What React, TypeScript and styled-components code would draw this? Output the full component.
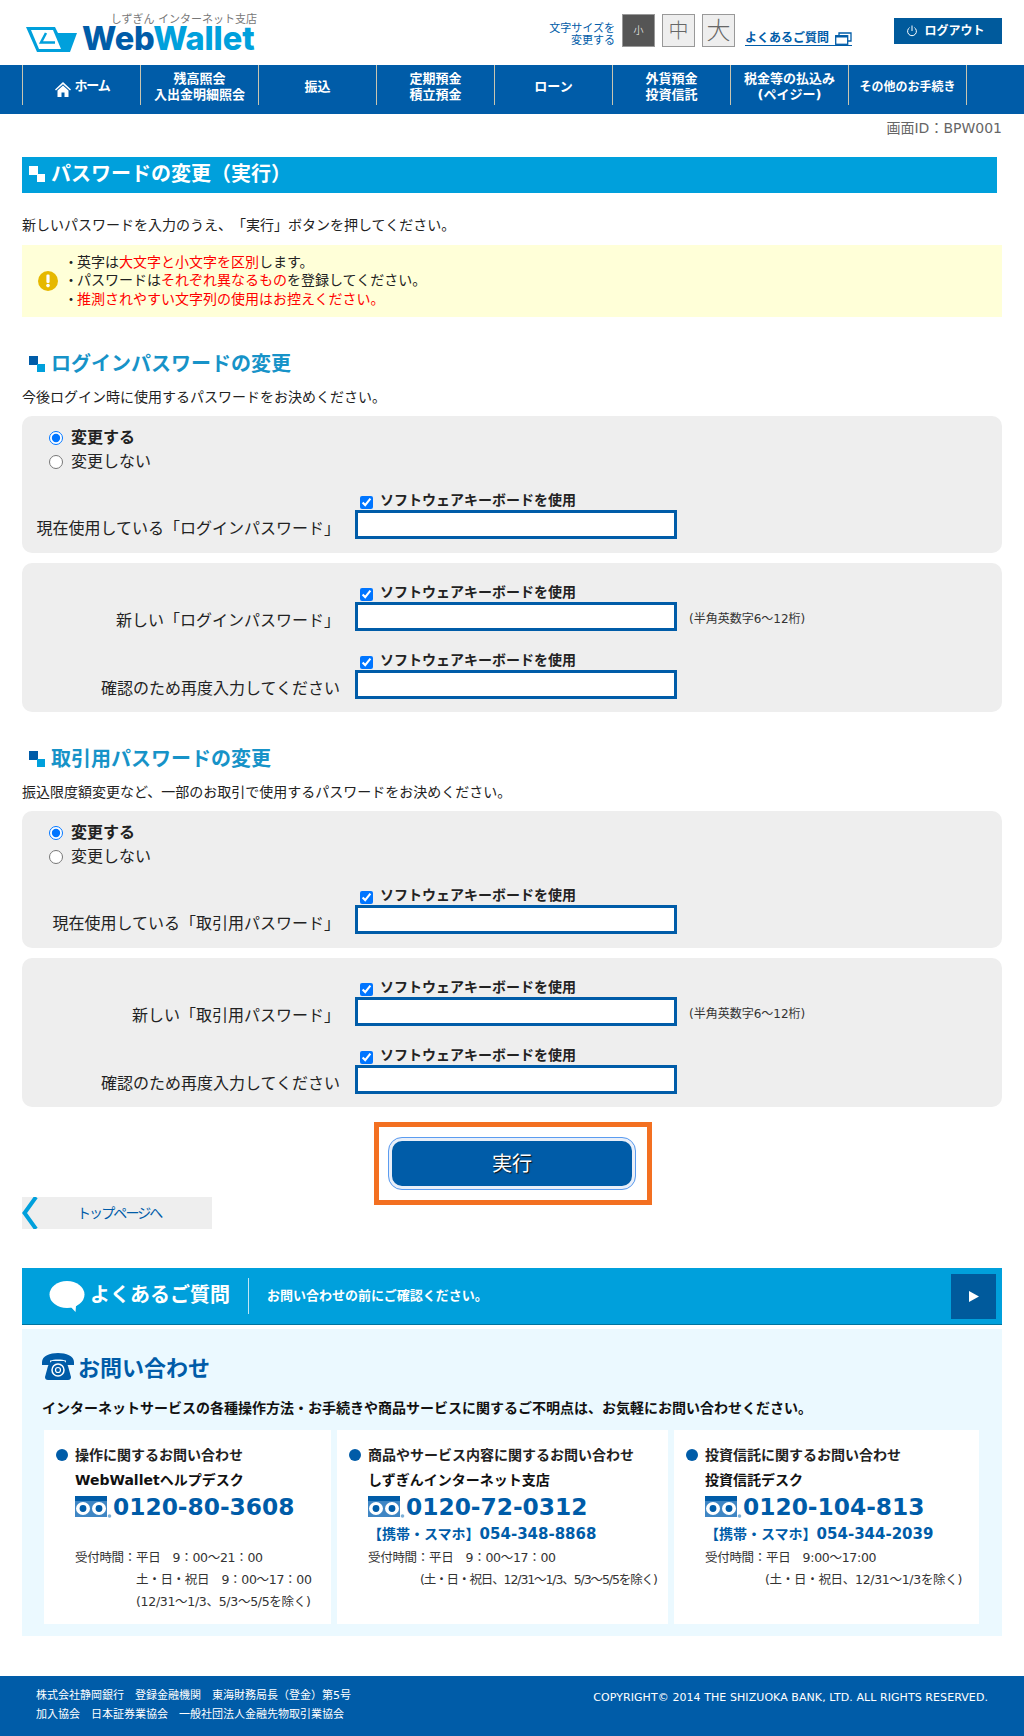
import styled, { createGlobalStyle } from 'styled-components';

const GlobalStyle = createGlobalStyle`
  html, body {
    margin: 0;
    padding: 0;
    background: #fff;
  }
  body {
    font-family: "DejaVu Sans", "Noto Sans CJK JP", sans-serif;
    font-size: 14px;
    line-height: 20px;
    color: #222;
    text-spacing-trim: space-all;
  }
  * {
    box-sizing: border-box;
  }
`;

const NAVY = '#005ca8';
const SKY = '#00a0dc';

const Page = styled.div`
  width: 1024px;
  height: 1736px;
  overflow: hidden;
`;

const Header = styled.header`
  height: 65px;
  padding: 0 22px 0 26px;
  display: flex;
  align-items: flex-start;
`;

const Logo = styled.div`
  width: 232px;
  padding-top: 13px;
`;

const LogoTagline = styled.div`
  font-size: 11px;
  line-height: 13px;
  color: #777;
  text-align: right;
  margin-right: 1px;
`;

const LogoRow = styled.div`
  display: flex;
  align-items: center;
  gap: 5px;
`;

const LogoWord = styled.div`
  font-family: Inter, sans-serif;
  font-weight: 800;
  font-size: 32.5px;
  line-height: 26px;
  letter-spacing: -0.1px;
  color: ${SKY};
  white-space: nowrap;

  b {
    font-weight: 800;
    color: ${NAVY};
  }
`;

const HeaderTools = styled.div`
  margin-left: auto;
  display: flex;
  align-items: flex-start;
`;

const SizeCaption = styled.div`
  width: 80px;
  margin: 21px 7px 0 0;
  font-size: 11px;
  line-height: 12px;
  text-align: right;
  color: ${NAVY};
  font-family: "Noto Sans CJK JP", sans-serif;
`;

const SizeButton = styled.div<{ $active?: boolean; $size: number }>`
  width: 33px;
  height: 33px;
  margin: 14px 7px 0 0;
  display: flex;
  align-items: center;
  justify-content: center;
  border: 1px solid #999;
  background: ${(p) => (p.$active ? '#555' : '#eee')};
  color: ${(p) => (p.$active ? '#fff' : '#666')};
  font-size: ${(p) => p.$size}px;
  line-height: 1;
  font-weight: 300;
`;

const FaqLink = styled.a`
  margin: 31px 42px 0 3px;
  display: flex;
  align-items: center;
  gap: 6px;
  font-size: 12px;
  line-height: 14px;
  height: 15px;
  font-weight: 700;
  color: ${NAVY};
  border-bottom: 1px solid ${NAVY};
`;

const LogoutButton = styled.div`
  width: 108px;
  height: 26px;
  margin-top: 18px;
  padding-right: 5px;
  display: flex;
  align-items: center;
  justify-content: center;
  gap: 6px;
  background: #005a9c;
  color: #fff;
  font-size: 12px;
  font-weight: 700;
`;

const Nav = styled.nav`
  height: 49px;
  padding-left: 22px;
  background: ${NAVY};
  display: flex;
  align-items: flex-start;
`;

const NavItem = styled.div<{ $first?: boolean; $small?: boolean }>`
  width: ${(p) => (p.$first ? 119 : 118)}px;
  height: 40px;
  padding-top: 3px;
  display: flex;
  align-items: center;
  justify-content: center;
  gap: 3px;
  text-align: center;
  color: #fff;
  font-size: ${(p) => (p.$small ? 12 : 13)}px;
  line-height: 16px;
  font-weight: 700;
  white-space: pre-line;
  border-right: 1px solid #c9c5b0;
  border-left: ${(p) => (p.$first ? '1px solid #c9c5b0' : 'none')};
`;

const HomeLabel = styled.span`
  letter-spacing: -1.2px;
  margin-bottom: 1px;
`;

const HomeGlyph = styled.svg`
  margin: 6px 0 0 2px;
`;

const ScreenId = styled.div`
  height: 43px;
  padding-top: 4px;
  padding-right: 22px;
  text-align: right;
  font-size: 14px;
  color: #666;
`;

const Main = styled.main`
  padding: 0 22px;
`;

const PageTitle = styled.h1`
  width: 975px;
  height: 36px;
  margin: 0;
  padding: 0 0 2px 7px;
  display: flex;
  align-items: center;
  gap: 6px;
  background: ${SKY};
  color: #fff;
  font-size: 20px;
  line-height: 34px;
  font-weight: 700;
`;

const Lead = styled.p`
  margin: 22px 0 10px;
  font-size: 14px;
  line-height: 20px;
`;

const Notice = styled.div`
  height: 72px;
  padding-left: 16px;
  display: flex;
  align-items: center;
  background: #ffffd8;
`;

const NoticeList = styled.ul`
  list-style: none;
  margin: -1px 0 0 6px;
  padding: 0;
  font-size: 14px;
  line-height: 18.5px;
`;

const Red = styled.span`
  color: #f00;
`;

const SectionHeading = styled.h2`
  height: 28px;
  margin: 32px 0 10px;
  padding: 1px 0 0 7px;
  display: flex;
  align-items: center;
  gap: 6px;
  color: #1793c8;
  font-size: 20px;
  line-height: 28px;
  font-weight: 700;
`;

const SectionNote = styled.p`
  margin: 0 0 9px;
  font-size: 14px;
  line-height: 20px;
`;

const Panel = styled.div<{ $top: number; $bottom: number }>`
  margin-bottom: 10px;
  padding: ${(p) => p.$top}px 0 ${(p) => p.$bottom}px;
  background: #eee;
  border-radius: 10px;
`;

const RadioGroup = styled.div`
  margin-bottom: 16px;
  padding: 1px 0 0 27px;
`;

const RadioRow = styled.label<{ $bold?: boolean }>`
  height: 24px;
  display: flex;
  align-items: center;
  gap: 8px;
  font-size: 16px;
  font-weight: ${(p) => (p.$bold ? 700 : 400)};
`;

const Radio = styled.input`
  width: 14px;
  height: 14px;
  margin: 0;
`;

const FieldRow = styled.div`
  display: grid;
  grid-template-columns: 333px 322px auto;
  grid-template-rows: 20px 29px;
  margin-bottom: 19px;

  &:last-child {
    margin-bottom: 0;
  }
`;

const FieldLabel = styled.label`
  grid-row: 2;
  align-self: end;
  padding-right: 15px;
  height: 29px;
  font-size: 16px;
  line-height: 37px;
  text-align: right;
  white-space: nowrap;
`;

const KeyboardToggle = styled.label`
  grid-column: 2;
  grid-row: 1;
  height: 20px;
  padding-left: 5px;
  display: flex;
  align-items: center;
  gap: 7px;
  font-size: 14px;
  line-height: 20px;
  font-weight: 700;
`;

const Check = styled.input`
  width: 13px;
  height: 13px;
  margin: 4px 0 0;
`;

const PasswordInput = styled.input`
  grid-column: 2;
  grid-row: 2;
  width: 322px;
  height: 29px;
  padding: 0 4px;
  border: 3px solid ${NAVY};
  background: #fff;
  border-radius: 0;
  outline: none;
`;

const FieldHint = styled.span`
  grid-column: 3;
  grid-row: 2;
  height: 29px;
  padding-left: 12px;
  font-size: 12px;
  line-height: 34px;
  color: #333;
`;

const SubmitFrame = styled.div`
  width: 278px;
  height: 83px;
  margin: 15px 0 0 352px;
  padding: 10px 11px 10px 9px;
  border: 5px solid #f37021;
`;

const SubmitButton = styled.button`
  width: 248px;
  height: 53px;
  padding: 0;
  display: block;
  font-family: inherit;
  font-size: 20px;
  line-height: 1;
  color: #fff;
  text-shadow: 1px 1px 1px #111;
  background: ${NAVY};
  border: 4px solid #e9eff9;
  border-radius: 14px;
  outline: 1.5px solid #5b9cf0;
  outline-offset: -1px;
`;

const BackLink = styled.a`
  width: 190px;
  height: 32px;
  margin-top: -8px;
  display: flex;
  align-items: center;
  background: #eee;
  color: ${NAVY};
  font-size: 14px;
  letter-spacing: -1.9px;
`;

const BackText = styled.span`
  margin-left: 39px;
`;

const FaqBar = styled.div`
  height: 57px;
  margin-top: 39px;
  padding: 6px 6px 6px 27px;
  display: flex;
  align-items: center;
  background: ${SKY};
  border-bottom: 1px solid #00749f;
  color: #fff;
`;

const FaqTitle = styled.div`
  margin-left: 5px;
  padding-right: 18px;
  height: 36px;
  border-right: 1px solid #bfe6f6;
  font-size: 20px;
  line-height: 34px;
  font-weight: 700;
`;

const FaqNote = styled.div`
  margin-left: 18px;
  font-size: 13px;
  font-weight: 700;
`;

const FaqArrow = styled.div`
  width: 45px;
  height: 45px;
  margin-left: auto;
  display: flex;
  align-items: center;
  justify-content: center;
  background: #005a9c;
`;

const ContactBox = styled.section`
  height: 307px;
  margin-top: 4px;
  padding: 23px 23px 12px 20px;
  background: #ebf9ff;
`;

const ContactHeading = styled.h2`
  height: 34px;
  margin: 0;
  display: flex;
  align-items: center;
  gap: 4px;
  color: ${NAVY};
  font-size: 22px;
  line-height: 36px;
  font-weight: 700;
`;

const PhoneGlyph = styled.svg`
  margin-bottom: 5px;
`;

const ContactLead = styled.p`
  margin: 12px 0 12px;
  font-size: 14px;
  line-height: 20px;
  font-weight: 700;
  color: #111;
  white-space: nowrap;
`;

const CardGrid = styled.div`
  margin-left: 2px;
  display: grid;
  grid-template-columns: 287px 331px 305px;
  column-gap: 6px;
`;

const Card = styled.article`
  height: 194px;
  padding: 13px 0 0 31px;
  background: #fff;
`;

const CardTitle = styled.h3`
  position: relative;
  height: 25px;
  margin: 0;
  font-size: 14px;
  line-height: 24px;
  font-weight: 700;
  color: #222;
  white-space: nowrap;

  &::before {
    content: '';
    position: absolute;
    left: -19px;
    top: 6px;
    width: 12px;
    height: 12px;
    border-radius: 50%;
    background: ${NAVY};
  }
`;

const DeskName = styled.div`
  height: 25px;
  font-size: 14px;
  line-height: 24px;
  font-weight: 700;
  color: #111;
`;

const PhoneRow = styled.div`
  height: 28px;
  display: flex;
  align-items: center;
  gap: 1px;
  color: ${NAVY};
  font-size: 23.3px;
  line-height: 28px;
  font-weight: 700;
`;

const MobileRow = styled.div`
  height: 25px;
  margin-top: 1px;
  color: ${NAVY};
  font-size: 14px;
  line-height: 25px;
  font-weight: 700;
  white-space: nowrap;

  span {
    font-size: 15px;
  }
`;

const Hours = styled.div<{ $indent?: number; $tight?: boolean }>`
  height: 22px;
  padding-left: ${(p) => p.$indent ?? 0}px;
  font-size: 12.5px;
  line-height: 22px;
  color: #333;
  white-space: pre;
  letter-spacing: ${(p) => (p.$tight ? '-1.1px' : '-0.3px')};
`;

const Footer = styled.footer`
  height: 60px;
  margin-top: 40px;
  padding: 10px 36px 0;
  display: flex;
  justify-content: space-between;
  background: ${NAVY};
  color: #fff;
  font-size: 11px;
  line-height: 19px;
`;

const Copyright = styled.div`
  margin-top: 2px;
  letter-spacing: 0.07px;
`;

const Bullet = styled.span`
  display: inline-block;
  width: 13px;
`;

function SquareMark({ color, accent }: { color: string; accent: string }) {
  return (
    <svg width="16" height="16" viewBox="0 0 16 16">
      <rect x="0" y="0" width="9" height="9" fill={color} />
      <rect x="8" y="8" width="8" height="8" fill={accent} />
    </svg>
  );
}

function LogoMark() {
  return (
    <svg width="51" height="25" viewBox="0 0 51 25">
      <path d="M0 0H29L32 6H51L44 25H11Z" fill={SKY} />
      <path d="M5 3H27L35 22H13Z" fill="#fff" />
      <path d="M20 6L15 15.5H29" fill="none" stroke={SKY} strokeWidth="2.5" />
    </svg>
  );
}

function HomeIcon() {
  return (
    <HomeGlyph width="16" height="15" viewBox="0 0 16 15">
      <path d="M8 0L0 7.5L1 8.5L8 2.2L15 8.5L16 7.5Z" fill="#fff" />
      <path d="M8 3.5L2.5 8.6V15H6.5V10.5H9.5V15H13.5V8.6Z" fill="#fff" />
    </HomeGlyph>
  );
}

function WindowIcon() {
  return (
    <svg width="17" height="13" viewBox="0 0 17 13">
      <path d="M4 3V1H16V9H13" fill="none" stroke={NAVY} strokeWidth="1.3" />
      <rect x="0.7" y="3.7" width="12" height="8.6" fill="none" stroke={NAVY} strokeWidth="1.3" />
      <rect x="0.7" y="3.5" width="12" height="2" fill={NAVY} />
    </svg>
  );
}

function PowerIcon() {
  return (
    <svg width="12" height="12" viewBox="0 0 12 12" fill="none" stroke="#fff" strokeWidth="1">
      <path d="M3.6 2.6A4.4 4.4 0 1 0 8.4 2.6" />
      <path d="M6 0.5V6" />
    </svg>
  );
}

function WarningIcon() {
  return (
    <svg width="20" height="20" viewBox="0 0 20 20">
      <circle cx="10" cy="10" r="10" fill="#e6b800" />
      <rect x="8.4" y="3.5" width="3.2" height="8.5" rx="1.2" fill="#fff" />
      <circle cx="10" cy="14.6" r="1.8" fill="#fff" />
    </svg>
  );
}

function BackChevron() {
  return (
    <svg width="16" height="32" viewBox="0 0 16 32">
      <path d="M14 0L2.5 16L14 32" fill="none" stroke={SKY} strokeWidth="4" />
    </svg>
  );
}

function BubbleIcon() {
  return (
    <svg width="36" height="31" viewBox="0 0 36 31">
      <ellipse cx="18" cy="13.5" rx="17.5" ry="13.5" fill="#fff" />
      <path d="M20 24L31 21L27 25L26.5 31Z" fill="#fff" />
    </svg>
  );
}

function PhoneIcon() {
  return (
    <PhoneGlyph width="32" height="27" viewBox="0 0 32 27">
      <path d="M0 9C0 3 8 0 16 0S32 3 32 9V12H24V7.5C20 6 12 6 8 7.5V12H0Z" fill={NAVY} />
      <path d="M6 13C7 11 8 9 10 8H22C24 9 25 11 26 13L29 24C29 26 28 27 26 27H6C4 27 3 26 3 24Z" fill={NAVY} />
      <circle cx="16" cy="17" r="6" fill="none" stroke="#fff" strokeWidth="1.5" />
      <circle cx="16" cy="17" r="2.5" fill="none" stroke="#fff" strokeWidth="1.2" />
    </PhoneGlyph>
  );
}

function FreeDialIcon() {
  return (
    <svg width="37" height="22" viewBox="0 0 37 22">
      <rect x="0" y="0" width="32" height="21" fill="#3f86c4" />
      <rect x="0" y="0" width="32" height="5" fill={NAVY} />
      <ellipse cx="8" cy="12.5" rx="7" ry="6.5" fill="#fff" />
      <ellipse cx="24" cy="12.5" rx="7" ry="6.5" fill="#fff" />
      <circle cx="8" cy="12.5" r="3.4" fill={NAVY} />
      <circle cx="24" cy="12.5" r="3.4" fill={NAVY} />
      <circle cx="34.5" cy="20" r="1.8" fill="#7fb0d8" />
    </svg>
  );
}

function KeyboardField({ label, hint }: { label: string; hint?: boolean }) {
  return (
    <FieldRow>
      <KeyboardToggle>
        <Check type="checkbox" defaultChecked />
        ソフトウェアキーボードを使用
      </KeyboardToggle>
      <FieldLabel>{label}</FieldLabel>
      <PasswordInput type="password" />
      {hint && <FieldHint>(半角英数字6～12桁)</FieldHint>}
    </FieldRow>
  );
}

function PasswordSection({
  name,
  title,
  note,
  current,
  next,
}: {
  name: string;
  title: string;
  note: string;
  current: string;
  next: string;
}) {
  return (
    <>
      <SectionHeading>
        <SquareMark color={NAVY} accent={SKY} />
        {title}
      </SectionHeading>
      <SectionNote>{note}</SectionNote>
      <Panel $top={9} $bottom={14}>
        <RadioGroup>
          <RadioRow $bold>
            <Radio type="radio" name={name} defaultChecked />
            変更する
          </RadioRow>
          <RadioRow>
            <Radio type="radio" name={name} />
            変更しない
          </RadioRow>
        </RadioGroup>
        <KeyboardField label={current} />
      </Panel>
      <Panel $top={19} $bottom={13}>
        <KeyboardField label={next} hint />
        <KeyboardField label="確認のため再度入力してください" />
      </Panel>
    </>
  );
}

const navItems = [
  { label: '残高照会\n入出金明細照会' },
  { label: '振込' },
  { label: '定期預金\n積立預金' },
  { label: 'ローン' },
  { label: '外貨預金\n投資信託' },
  { label: '税金等の払込み\n(ペイジー)' },
  { label: 'その他のお手続き', small: true },
];

export default function App() {
  return (
    <Page>
      <GlobalStyle />
      <Header>
        <Logo>
          <LogoTagline>しずぎん インターネット支店</LogoTagline>
          <LogoRow>
            <LogoMark />
            <LogoWord>
              <b>Web</b>Wallet
            </LogoWord>
          </LogoRow>
        </Logo>
        <HeaderTools>
          <SizeCaption>
            文字サイズを
            <br />
            変更する
          </SizeCaption>
          <SizeButton $active $size={10}>小</SizeButton>
          <SizeButton $size={20}>中</SizeButton>
          <SizeButton $size={24}>大</SizeButton>
          <FaqLink>
            よくあるご質問
            <WindowIcon />
          </FaqLink>
          <LogoutButton>
            <PowerIcon />
            ログアウト
          </LogoutButton>
        </HeaderTools>
      </Header>
      <Nav>
        <NavItem $first>
          <HomeIcon />
          <HomeLabel>ホーム</HomeLabel>
        </NavItem>
        {navItems.map((item) => (
          <NavItem key={item.label} $small={item.small}>
            {item.label}
          </NavItem>
        ))}
      </Nav>
      <ScreenId>画面ID：BPW001</ScreenId>
      <Main>
        <PageTitle>
          <SquareMark color="#fff" accent="#fff" />
          パスワードの変更（実行）
        </PageTitle>
        <Lead>新しいパスワードを入力のうえ、「実行」ボタンを押してください。</Lead>
        <Notice>
          <WarningIcon />
          <NoticeList>
            <li>
              <Bullet>・</Bullet>英字は<Red>大文字と小文字を区別</Red>します。
            </li>
            <li>
              <Bullet>・</Bullet>パスワードは<Red>それぞれ異なるもの</Red>を登録してください。
            </li>
            <li>
              <Bullet>・</Bullet>
              <Red>推測されやすい文字列の使用はお控えください。</Red>
            </li>
          </NoticeList>
        </Notice>
        <PasswordSection
          name="login"
          title="ログインパスワードの変更"
          note="今後ログイン時に使用するパスワードをお決めください。"
          current="現在使用している「ログインパスワード」"
          next="新しい「ログインパスワード」"
        />
        <PasswordSection
          name="trade"
          title="取引用パスワードの変更"
          note="振込限度額変更など、一部のお取引で使用するパスワードをお決めください。"
          current="現在使用している「取引用パスワード」"
          next="新しい「取引用パスワード」"
        />
        <SubmitFrame>
          <SubmitButton type="button">実行</SubmitButton>
        </SubmitFrame>
        <BackLink>
          <BackChevron />
          <BackText>トップページへ</BackText>
        </BackLink>
        <FaqBar>
          <BubbleIcon />
          <FaqTitle>よくあるご質問</FaqTitle>
          <FaqNote>お問い合わせの前にご確認ください。</FaqNote>
          <FaqArrow>
            <svg width="10" height="11" viewBox="0 0 10 11">
              <path d="M0 0L10 5.5L0 11Z" fill="#fff" />
            </svg>
          </FaqArrow>
        </FaqBar>
        <ContactBox>
          <ContactHeading>
            <PhoneIcon />
            お問い合わせ
          </ContactHeading>
          <ContactLead>
            インターネットサービスの各種操作方法・お手続きや商品サービスに関するご不明点は、お気軽にお問い合わせください。
          </ContactLead>
          <CardGrid>
            <Card>
              <CardTitle>操作に関するお問い合わせ</CardTitle>
              <DeskName>WebWalletヘルプデスク</DeskName>
              <PhoneRow>
                <FreeDialIcon />
                0120-80-3608
              </PhoneRow>
              <MobileRow />
              <Hours>受付時間：平日　9：00～21：00</Hours>
              <Hours $indent={61}>土・日・祝日　9：00～17：00</Hours>
              <Hours $indent={61}>(12/31～1/3、5/3～5/5を除く)</Hours>
            </Card>
            <Card>
              <CardTitle>商品やサービス内容に関するお問い合わせ</CardTitle>
              <DeskName>しずぎんインターネット支店</DeskName>
              <PhoneRow>
                <FreeDialIcon />
                0120-72-0312
              </PhoneRow>
              <MobileRow>
                【携帯・スマホ】<span>054-348-8868</span>
              </MobileRow>
              <Hours>受付時間：平日　9：00～17：00</Hours>
              <Hours $indent={52} $tight>(土・日・祝日、12/31～1/3、5/3～5/5を除く)</Hours>
            </Card>
            <Card>
              <CardTitle>投資信託に関するお問い合わせ</CardTitle>
              <DeskName>投資信託デスク</DeskName>
              <PhoneRow>
                <FreeDialIcon />
                0120-104-813
              </PhoneRow>
              <MobileRow>
                【携帯・スマホ】<span>054-344-2039</span>
              </MobileRow>
              <Hours>受付時間：平日　9:00～17:00</Hours>
              <Hours $indent={60}>(土・日・祝日、12/31～1/3を除く)</Hours>
            </Card>
          </CardGrid>
        </ContactBox>
      </Main>
      <Footer>
        <div>
          株式会社静岡銀行　登録金融機関　東海財務局長（登金）第5号
          <br />
          加入協会　日本証券業協会　一般社団法人金融先物取引業協会
        </div>
        <Copyright>COPYRIGHT© 2014 THE SHIZUOKA BANK, LTD. ALL RIGHTS RESERVED.</Copyright>
      </Footer>
    </Page>
  );
}
